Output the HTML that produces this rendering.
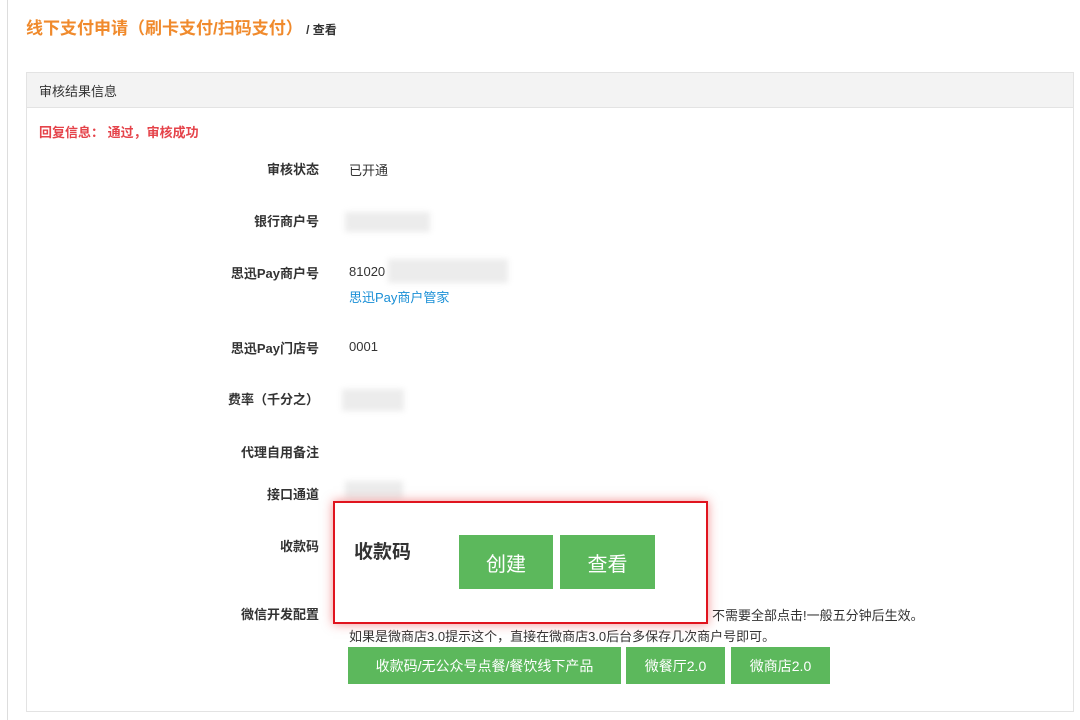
<!DOCTYPE html>
<html><head><meta charset="utf-8"><style>
*{margin:0;padding:0;box-sizing:border-box}
body{width:1080px;height:720px;background:#fff;font-family:"Liberation Sans","Noto Sans CJK SC",sans-serif;font-size:13px;color:#333;position:relative;overflow:hidden}
.a{position:absolute}
.lbl{position:absolute;right:761px;font-weight:bold;font-size:13px;color:#333;white-space:nowrap}
.val{position:absolute;left:349px;font-size:13px;color:#333;white-space:nowrap}
.blur{position:absolute;background:#ececec;filter:blur(3px)}
.btn{position:absolute;background:#5cb85c;color:#fff;display:flex;align-items:center;justify-content:center;font-size:14px}
</style></head><body>
<div class="a" style="left:7px;top:0;width:1px;height:720px;background:#ddd"></div>
<div class="a" style="left:26px;top:14px;font-size:17px;font-weight:bold;color:#f08a2c;white-space:nowrap">线下支付申请（刷卡支付/扫码支付）<span style="font-size:12px;color:#333;font-weight:bold"> / 查看</span></div>
<div class="a" style="left:26px;top:72px;width:1048px;height:640px;border:1px solid #e3e3e3"></div>
<div class="a" style="left:27px;top:73px;width:1046px;height:35px;background:#f3f3f3;border-bottom:1px solid #e3e3e3;padding:8px 12px;font-size:13px">审核结果信息</div>
<div class="a" style="left:39px;top:122px;color:#e5434a;font-weight:bold;font-size:13px">回复信息： 通过，审核成功</div>
<div class="lbl" style="top:159px">审核状态</div><div class="val" style="top:160px">已开通</div>
<div class="lbl" style="top:211px">银行商户号</div><div class="blur" style="left:345px;top:212px;width:85px;height:20px"></div>
<div class="lbl" style="top:263px">思迅Pay商户号</div><div class="val" style="top:264px">81020</div><div class="blur" style="left:388px;top:259px;width:120px;height:24px"></div>
<div class="val" style="top:287px;color:#1a8fd6">思迅Pay商户管家</div>
<div class="lbl" style="top:338px">思迅Pay门店号</div><div class="val" style="top:339px">0001</div>
<div class="lbl" style="top:389px">费率（千分之）</div><div class="blur" style="left:342px;top:389px;width:62px;height:22px"></div>
<div class="lbl" style="top:442px">代理自用备注</div>
<div class="lbl" style="top:484px">接口通道</div><div class="blur" style="left:345px;top:481px;width:58px;height:18px"></div>
<div class="lbl" style="top:536px">收款码</div>
<div class="lbl" style="top:604px">微信开发配置</div>
<div class="val" style="top:605px;left:712px">不需要全部点击!一般五分钟后生效。</div>
<div class="val" style="top:626px">如果是微商店3.0提示这个，直接在微商店3.0后台多保存几次商户号即可。</div>
<div class="btn" style="left:348px;top:647px;width:273px;height:37px">收款码/无公众号点餐/餐饮线下产品</div>
<div class="btn" style="left:626px;top:647px;width:99px;height:37px">微餐厅2.0</div>
<div class="btn" style="left:731px;top:647px;width:99px;height:37px">微商店2.0</div>
<div class="a" style="left:333px;top:501px;width:375px;height:123px;background:#fff;border:2px solid #e0141e;box-shadow:0 0 10px rgba(230,40,40,.5)"></div>
<div class="a" style="left:354px;top:537px;font-size:19px;font-weight:bold;color:#333">收款码</div>
<div class="btn" style="left:459px;top:535px;width:94px;height:54px;font-size:20px">创建</div>
<div class="btn" style="left:560px;top:535px;width:95px;height:54px;font-size:20px">查看</div>
</body></html>
